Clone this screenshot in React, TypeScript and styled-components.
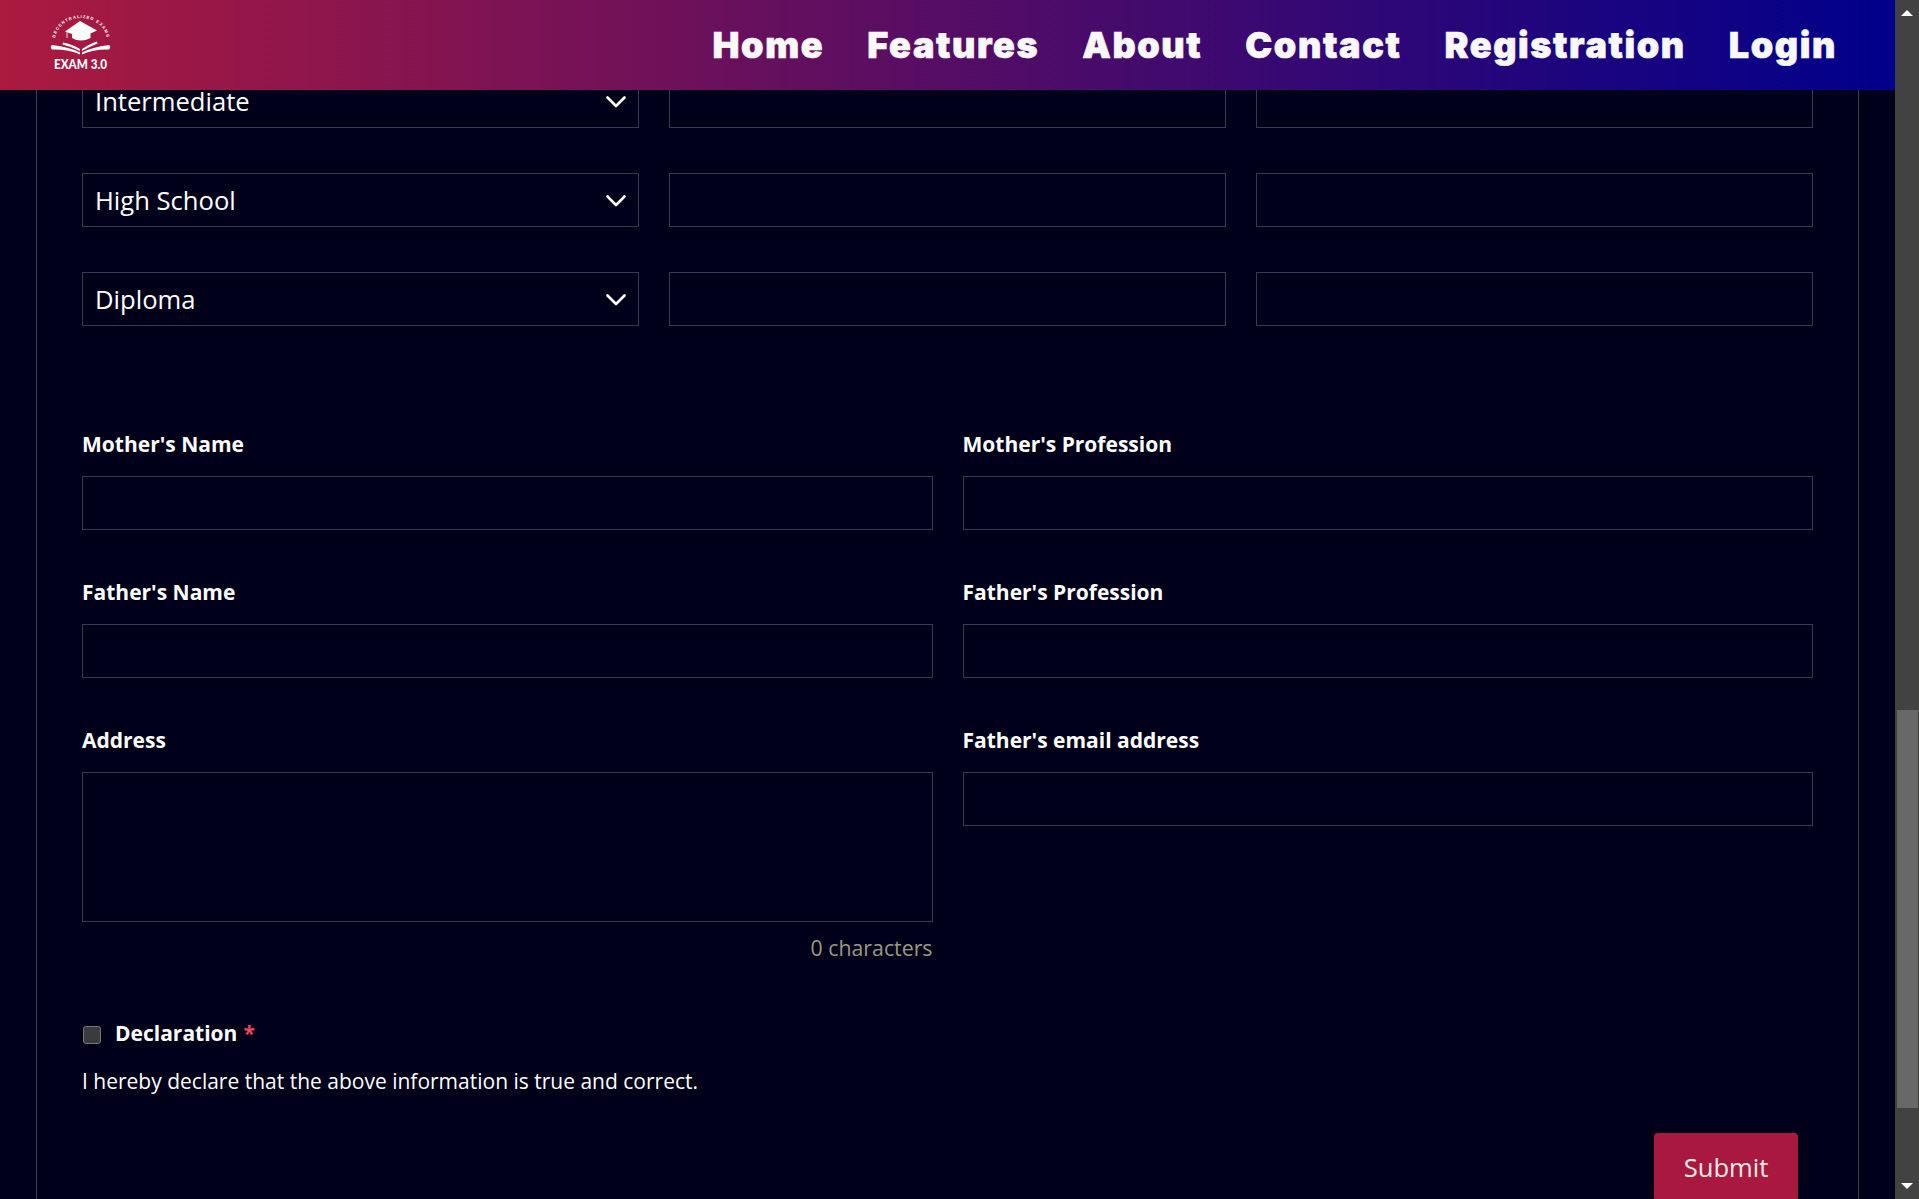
import React from "react";
import styled, { createGlobalStyle } from "styled-components";

const Global = createGlobalStyle`
  html, body { margin: 0; padding: 0; height: 100%; overflow: hidden; background: #00001a; }
  * { box-sizing: border-box; }
`;

const Shell = styled.div`
  display: flex;
  height: 1199px;
  font-family: "Open Sans", "Noto Sans", sans-serif;
  color: #fff;
`;
const Viewport = styled.div`
  position: relative;
  flex: 1;
  min-width: 0;
  height: 100%;
  overflow: hidden;
  background: #00001a;
`;
const Header = styled.header`
  position: absolute;
  top: 0;
  left: 0;
  right: 0;
  z-index: 5;
  height: 90px;
  display: flex;
  align-items: center;
  justify-content: space-between;
  padding: 0 58px 0 50px;
  background: linear-gradient(to right, #ab1a3f, #00008b);
`;
const Nav = styled.nav`
  display: flex;
  gap: 43px;
`;
const NavLink = styled.a`
  font-family: "Inter", "Liberation Sans", sans-serif;
  font-weight: 900;
  font-size: 36px;
  line-height: 48px;
  color: #f8f8f8;
  letter-spacing: 1.6px;
  -webkit-text-stroke: 0.6px #f8f8f8;
`;
const Panel = styled.main`
  margin: 0 36px;
  padding: 74px 45px 0;
  border-left: 1px solid #3d414d;
  border-right: 1px solid #3d414d;
  min-height: 1199px;
`;
const TripleRow = styled.div`
  display: grid;
  grid-template-columns: repeat(3, 1fr);
  gap: 30px;
  margin-bottom: 45px;
`;
const SelectWrap = styled.div`
  position: relative;
  height: 54px;
`;
const Select = styled.select`
  appearance: none;
  width: 100%;
  height: 54px;
  padding: 0 40px 0 12px;
  background: transparent;
  border: 1px solid #333d50;
  border-radius: 0;
  color: #fff;
  font: 400 25.6px "Open Sans", sans-serif;
  outline: none;
`;
const Chevron = styled.svg`
  position: absolute;
  right: 12px;
  top: 21px;
  width: 22px;
  height: 14px;
  pointer-events: none;
`;
const Input = styled.input`
  display: block;
  width: 100%;
  height: 54px;
  background: transparent;
  border: 1px solid #333d50;
  border-radius: 0;
  outline: none;
`;
const TwoCols = styled.div`
  display: grid;
  grid-template-columns: repeat(2, 1fr);
  column-gap: 30px;
  margin-top: 105px;
`;
const Field = styled.div`
  margin-bottom: 49px;
`;
const Label = styled.label`
  display: block;
  font-size: 21px;
  font-weight: 700;
  line-height: 26px;
  margin-bottom: 19px;
  color: #fff;
`;
const TextArea = styled.textarea`
  display: block;
  width: 100%;
  height: 150px;
  background: transparent;
  border: 1px solid #333d50;
  border-radius: 0;
  outline: none;
  resize: none;
`;
const Counter = styled.div`
  text-align: right;
  font-size: 21.3px;
  line-height: 27px;
  color: #9a9a80;
  margin-top: 12px;
`;
const DeclareRow = styled.div`
  display: flex;
  align-items: center;
  margin-top: 9px;
  height: 27px;
`;
const Check = styled.span`
  width: 18px;
  height: 18px;
  margin: 4px 14px 0 1px;
  border-radius: 3px;
  border: 1px solid #767676;
  background: #3b3b3b;
`;
const DeclareLabel = styled.span`
  font-size: 21px;
  font-weight: 700;
`;
const Star = styled.span`
  color: #f5445c;
  margin-left: 6px;
`;
const Statement = styled.p`
  margin: 22px 0 0;
  font-size: 21px;
  line-height: 27px;
`;
const Actions = styled.div`
  display: flex;
  justify-content: flex-end;
  margin-top: 38px;
  padding-right: 15px;
`;
const Submit = styled.button`
  width: 144px;
  height: 68px;
  border: 0;
  border-radius: 4px;
  background: #a9193f;
  color: #f3eaea;
  font: 400 25.6px "Open Sans", sans-serif;
`;
const ScrollBar = styled.aside`
  width: 24px;
  height: 100%;
  position: relative;
  background: #424242;
  display: flex;
  flex-direction: column;
  align-items: center;
  justify-content: space-between;
  padding: 10px 0;
`;
const Thumb = styled.div`
  position: absolute;
  left: 2px;
  right: 1px;
  top: 710px;
  height: 398px;
  background: #686868;
`;
const ArrowUp = styled.span`
  width: 0;
  height: 0;
  border-left: 6px solid transparent;
  border-right: 6px solid transparent;
  border-bottom: 6px solid #fff;
`;
const ArrowDown = styled.span`
  width: 0;
  height: 0;
  border-left: 6px solid transparent;
  border-right: 6px solid transparent;
  border-top: 6px solid #fff;
`;
const LogoSvg = styled.svg`
  display: block;
  width: 62px;
  height: 56px;
  margin-bottom: 4px;
  overflow: visible;
`;

const Logo = () => (
  <LogoSvg viewBox="0 0 62 56" aria-label="Exam 3.0 logo">
    <defs>
      <path id="logoArc" d="M5 26 A26 23 0 0 1 57 26" />
    </defs>
    <text fontFamily="Liberation Sans, sans-serif" fontWeight="700" fontSize="4.2" fill="#fff" letterSpacing="1">
      <textPath href="#logoArc" startOffset="50%" textAnchor="middle">DECENTRALIZED EXAMS</textPath>
    </text>
    {/* cap */}
    <path d="M30 6 L47 15.5 L40.5 18.5 L40.5 23 Q36 25.5 31 25.5 Q26 25.5 22 23 L22 19 L15 16.5 Z" fill="#fff" />
    <path d="M17 17 L17 23" stroke="#fff" strokeWidth="0.8" />
    {/* upper pages */}
    <path d="M13 27.5 Q22 29 30 34 L30 36 Q21 31.5 12.5 29.5 Z" fill="#fff" />
    <path d="M47 26.5 Q40 28.5 32 34 L32 36 Q40 31.5 47.5 28.5 Z" fill="#fff" />
    {/* lower pages */}
    <path d="M2 30 Q-0.5 32 2 34.5 Q18 34 30 39.5 L30 37.5 Q20 32 2 30 Z" fill="#fff" />
    <path d="M59 30 Q61.5 32 59 34.5 Q44 34 32 39.5 L32 37.5 Q42 32 59 30 Z" fill="#fff" />
    <text x="4" y="54" fontFamily="Lato, sans-serif" fontWeight="900" fontSize="13.7" fill="#fff" textLength="53" lengthAdjust="spacingAndGlyphs">EXAM 3.0</text>
  </LogoSvg>
);

const EduRow = ({ level }: { level: string }) => (
  <TripleRow>
    <SelectWrap>
      <Select defaultValue={level}>
        <option>{level}</option>
      </Select>
      <Chevron viewBox="0 0 22 14" fill="none">
        <path d="M2.5 2.5 L11 11 L19.5 2.5" stroke="#fff" strokeWidth="2.6" strokeLinecap="round" strokeLinejoin="round" />
      </Chevron>
    </SelectWrap>
    <Input />
    <Input />
  </TripleRow>
);

export default function App() {
  return (
    <Shell>
      <Global />
      <Viewport>
        <Header>
          <Logo />
          <Nav>
            {["Home", "Features", "About", "Contact", "Registration", "Login"].map((n) => (
              <NavLink key={n}>{n}</NavLink>
            ))}
          </Nav>
        </Header>
        <Panel>
          <EduRow level="Intermediate" />
          <EduRow level="High School" />
          <EduRow level="Diploma" />
          <TwoCols>
            <Field>
              <Label>Mother's Name</Label>
              <Input />
            </Field>
            <Field>
              <Label>Mother's Profession</Label>
              <Input />
            </Field>
            <Field>
              <Label>Father's Name</Label>
              <Input />
            </Field>
            <Field>
              <Label>Father's Profession</Label>
              <Input />
            </Field>
            <Field>
              <Label>Address</Label>
              <TextArea />
              <Counter>0 characters</Counter>
            </Field>
            <Field>
              <Label>Father's email address</Label>
              <Input />
            </Field>
          </TwoCols>
          <DeclareRow>
            <Check />
            <DeclareLabel>
              Declaration<Star>*</Star>
            </DeclareLabel>
          </DeclareRow>
          <Statement>I hereby declare that the above information is true and correct.</Statement>
          <Actions>
            <Submit>Submit</Submit>
          </Actions>
        </Panel>
      </Viewport>
      <ScrollBar>
        <ArrowUp />
        <Thumb />
        <ArrowDown />
      </ScrollBar>
    </Shell>
  );
}
